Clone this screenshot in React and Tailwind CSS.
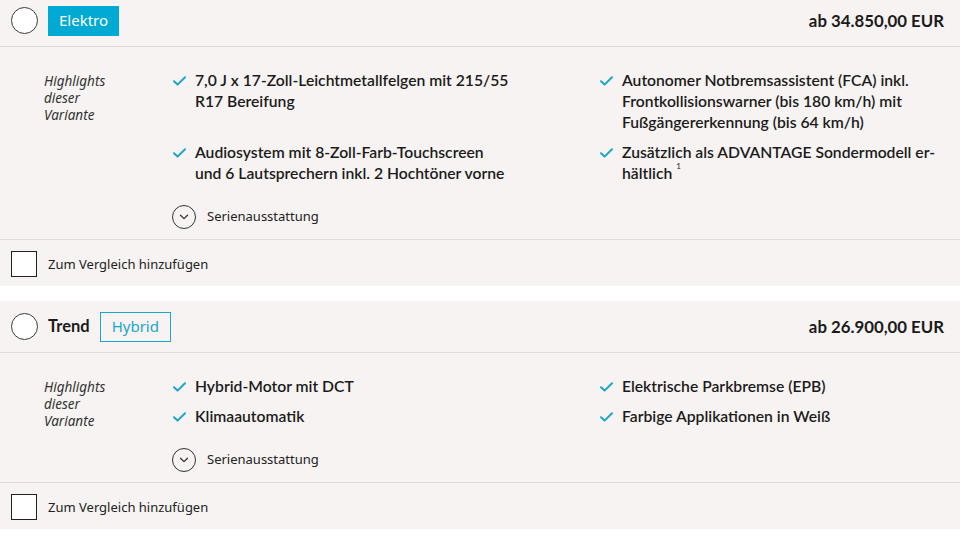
import React from "react";

const feat = { fontFamily: "Lato, 'Noto Sans', sans-serif" };
const body = { fontFamily: "'Noto Sans', 'Open Sans', sans-serif" };

function Check() {
  return (
    <svg width="13" height="10" viewBox="0 0 13 10" className="mt-[6px] shrink-0">
      <path d="M1 5.2 L4.6 8.6 L12 1.2" fill="none" stroke="#1aa7cb" strokeWidth="2" strokeLinecap="round" strokeLinejoin="round" />
    </svg>
  );
}

function Feature({ lines }) {
  return (
    <div className="flex items-start">
      <div className="w-[22px] shrink-0 flex">
        <Check />
      </div>
      <div className="text-[15.7px] leading-[21px] font-semibold text-[#1c1b1b] whitespace-nowrap" style={feat}>
        {lines.map((l, i) => (
          <div key={i}>{l}</div>
        ))}
      </div>
    </div>
  );
}

function Card({ header, price, features }) {
  return (
    <div className="bg-[#f6f3f2] w-full">
      <div className="h-[52px] flex items-center border-b border-[#e3dcd6] pl-[11px] pr-[16px]">
        <div className="w-[27px] h-[27px] rounded-full bg-white border border-[#3a3a3a] shrink-0" />
        <div className="ml-[10px] flex items-center gap-[10px]">{header}</div>
        <div className="ml-auto text-[16.8px] font-bold text-[#1c1b1b]" style={feat}>
          {price}
        </div>
      </div>
      <div className="flex pl-[44px] pt-[23px] pb-[10px] border-b border-[#e3dcd6]">
        <div className="w-[129px] shrink-0 italic text-[13.5px] leading-[17px] text-[#333] pt-[3px]" style={body}>
          Highlights
          <br />
          dieser
          <br />
          Variante
        </div>
        <div className="flex flex-col">
          <div className="grid grid-cols-[427px_1fr] gap-y-[9px]">
            {features.map((f, i) => (
              <Feature key={i} lines={f} />
            ))}
          </div>
          <div className="flex items-center mt-[21px] -ml-[1px]">
            <div className="w-[24px] h-[24px] rounded-full border border-[#333] flex items-center justify-center">
              <svg width="10" height="6" viewBox="0 0 10 6">
                <path d="M1.5 1.2 L5 4.6 L8.5 1.2" fill="none" stroke="#333" strokeWidth="1.3" strokeLinecap="round" strokeLinejoin="round" />
              </svg>
            </div>
            <span className="ml-[11px] text-[13px] text-[#222]" style={body}>
              Serienausstattung
            </span>
          </div>
        </div>
      </div>
      <div className="h-[46px] flex items-center pl-[11px] pt-[2px]">
        <div className="w-[26px] h-[26px] bg-white border border-[#222]" />
        <span className="ml-[11px] text-[13px] text-[#222] pt-[2px]" style={body}>
          Zum Vergleich hinzufügen
        </span>
      </div>
    </div>
  );
}

export default function App() {
  return (
    <div className="w-[960px] h-[540px] bg-white overflow-hidden">
      <div className="-mt-[5px] flex flex-col gap-[15px]">
        <Card
          header={
            <div className="h-[30px] px-[11px] bg-[#00aad2] text-white text-[15px] flex items-center" style={body}>
              Elektro
            </div>
          }
          price="ab 34.850,00 EUR"
          features={[
            ["7,0 J x 17-Zoll-Leichtmetallfelgen mit 215/55", "R17 Bereifung"],
            [
              "Autonomer Notbremsassistent (FCA) inkl.",
              "Frontkollisionswarner (bis 180 km/h) mit",
              "Fußgängererkennung (bis 64 km/h)",
            ],
            ["Audiosystem mit 8-Zoll-Farb-Touchscreen", "und 6 Lautsprechern inkl. 2 Hochtöner vorne"],
            [
              "Zusätzlich als ADVANTAGE Sondermodell er-",
              <span key="h">
                hältlich <sup className="text-[8px] font-normal align-[6px]">1</sup>
              </span>,
            ],
          ]}
        />
        <Card
          header={
            <>
              <span className="text-[16.5px] font-bold text-[#1c1b1b]" style={feat}>
                Trend
              </span>
              <div className="h-[30px] px-[11px] border border-[#1aa7cb] text-[#1aa7cb] text-[15px] flex items-center" style={body}>
                Hybrid
              </div>
            </>
          }
          price="ab 26.900,00 EUR"
          features={[
            ["Hybrid-Motor mit DCT"],
            ["Elektrische Parkbremse (EPB)"],
            ["Klimaautomatik"],
            ["Farbige Applikationen in Weiß"],
          ]}
        />
      </div>
    </div>
  );
}
